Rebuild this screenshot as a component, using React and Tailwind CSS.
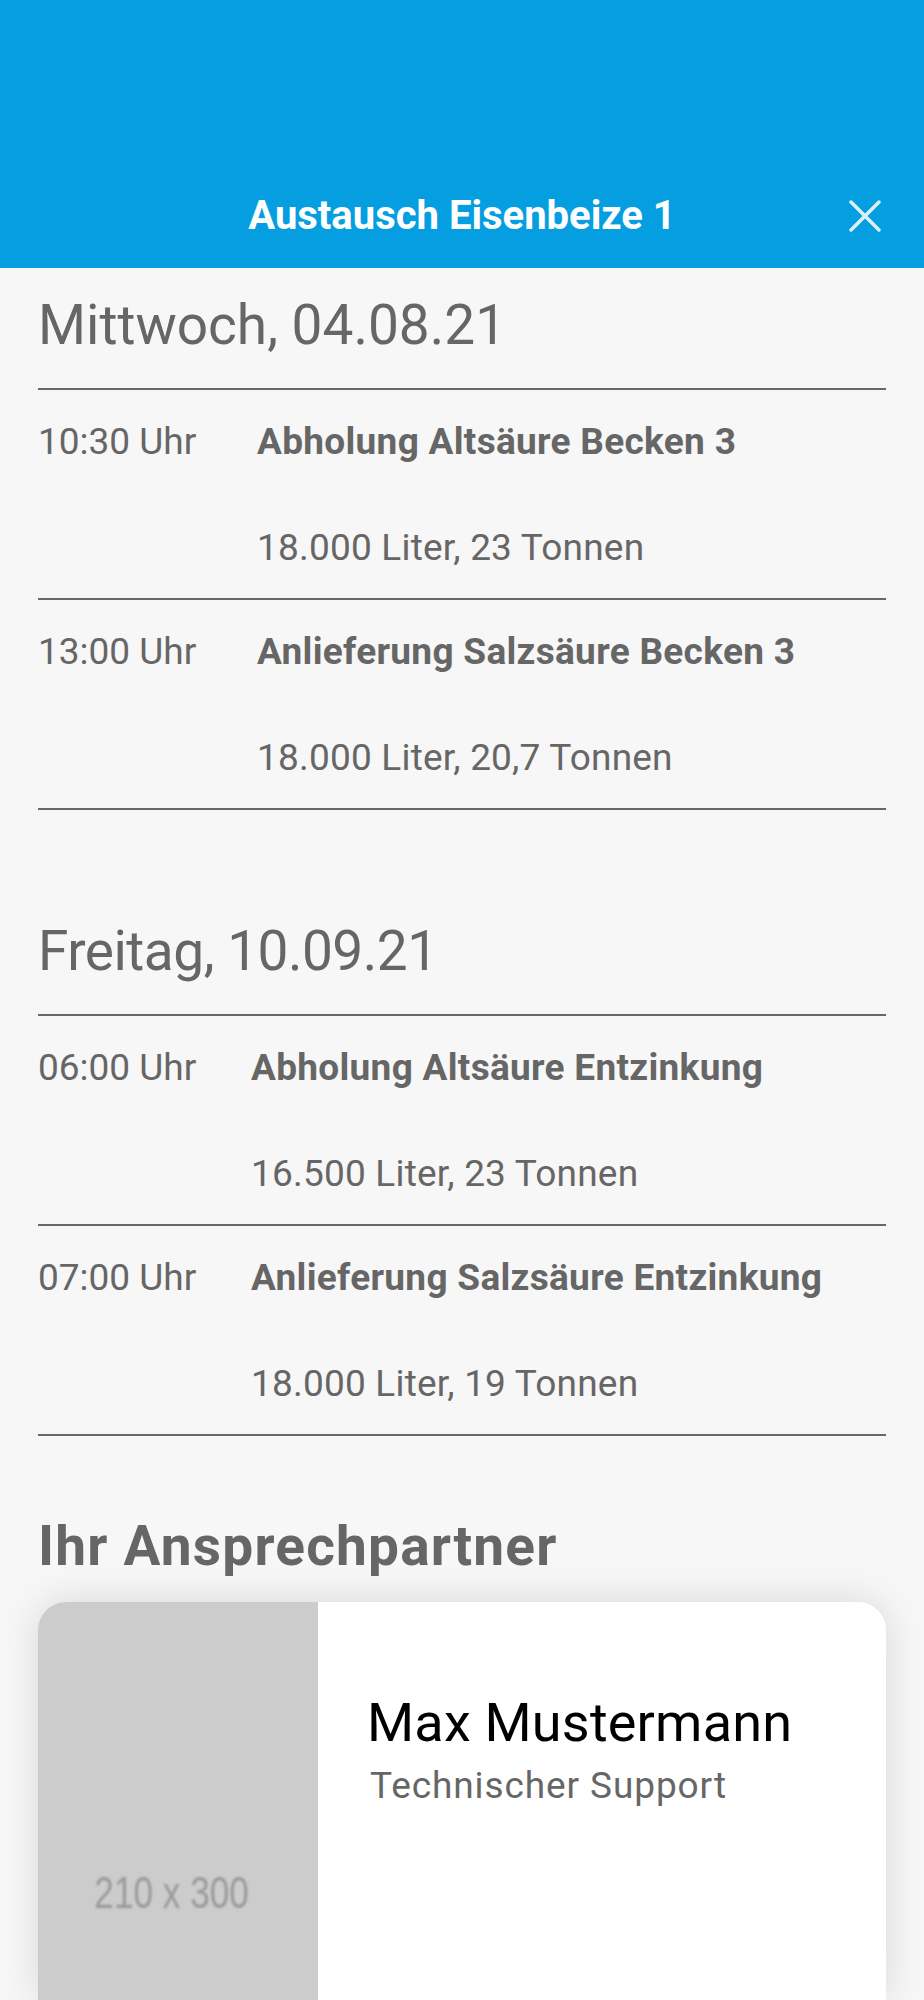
import React from "react";

const sections = [
  {
    date: "Mittwoch, 04.08.21",
    dateTrack: "tracking-[0px]",
    col: "w-[219px]",
    rows: [
      { time: "10:30 Uhr", title: "Abholung Altsäure Becken 3", sub: "18.000 Liter, 23 Tonnen" },
      { time: "13:00 Uhr", title: "Anlieferung Salzsäure Becken 3", sub: "18.000 Liter, 20,7 Tonnen" },
    ],
  },
  {
    date: "Freitag, 10.09.21",
    dateTrack: "tracking-[-0.5px]",
    col: "w-[213px]",
    rows: [
      { time: "06:00 Uhr", title: "Abholung Altsäure Entzinkung", sub: "16.500 Liter, 23 Tonnen" },
      { time: "07:00 Uhr", title: "Anlieferung Salzsäure Entzinkung", sub: "18.000 Liter, 19 Tonnen" },
    ],
  },
];

function Divider() {
  return <div className="h-[2px] bg-[#686868]" />;
}

function Section({ data, className }) {
  return (
    <section className={className}>
      <h2 className={`text-[55px] leading-none font-normal ${data.dateTrack}`}>{data.date}</h2>
      <div className="mt-[35px]">
        <Divider />
      </div>
      {data.rows.map((r) => (
        <div key={r.time}>
          <div className="flex pt-[33px] pb-[32px]">
            <div className={`${data.col} shrink-0 text-[37px] leading-none`}>{r.time}</div>
            <div className="flex flex-col">
              <div className="text-[37px] leading-none font-bold tracking-[0.3px] whitespace-nowrap">{r.title}</div>
              <div className="mt-[69px] text-[37px] leading-none tracking-[0.2px] whitespace-nowrap">{r.sub}</div>
            </div>
          </div>
          <Divider />
        </div>
      ))}
    </section>
  );
}

export default function App() {
  return (
    <div className="w-full h-[2000px] overflow-hidden bg-[#f7f7f7] text-[#666666] font-['Roboto',sans-serif]">
      <header className="h-[268px] bg-[#059ee0] flex flex-col justify-end">
        <div className="relative h-[104px] flex items-center justify-center">
          <h1 className="text-[40px] leading-none font-bold text-white">Austausch Eisenbeize 1</h1>
          <button className="absolute right-[43px] top-1/2 -translate-y-1/2 w-[32px] h-[32px]" aria-label="Schließen">
            <svg width="32" height="32" viewBox="0 0 32 32" fill="none">
              <path d="M2 2L30 30M30 2L2 30" stroke="#dcf0fb" strokeWidth="3.5" strokeLinecap="round" />
            </svg>
          </button>
        </div>
      </header>

      <main className="px-[38px]">
        <Section data={sections[0]} className="pt-[30px]" />
        <Section data={sections[1]} className="pt-[114px]" />

        <h2 className="mt-[83px] text-[55px] leading-none font-bold tracking-[1.2px]">Ihr Ansprechpartner</h2>

        <div className="mt-[28px] h-[398px] flex bg-white rounded-t-[28px] overflow-hidden shadow-[0_0_40px_rgba(0,0,0,0.13)]">
          <div className="w-[280px] shrink-0 bg-[#cccccc] flex justify-center pt-[269px]">
            <span className="block h-[44px] text-[44px] leading-none text-[#9a9a9a] font-['Liberation_Sans',Arial,sans-serif] scale-x-[0.8] blur-[1px] -translate-x-[6px] whitespace-nowrap">
              210 x 300
            </span>
          </div>
          <div className="flex flex-col pl-[49px] pt-[94px]">
            <div className="text-[54px] leading-none text-black tracking-[0.2px] whitespace-nowrap">Max Mustermann</div>
            <div className="mt-[17px] ml-[3px] text-[37px] leading-none text-[#666666] tracking-[0.9px] whitespace-nowrap">Technischer Support</div>
          </div>
        </div>
      </main>
    </div>
  );
}
